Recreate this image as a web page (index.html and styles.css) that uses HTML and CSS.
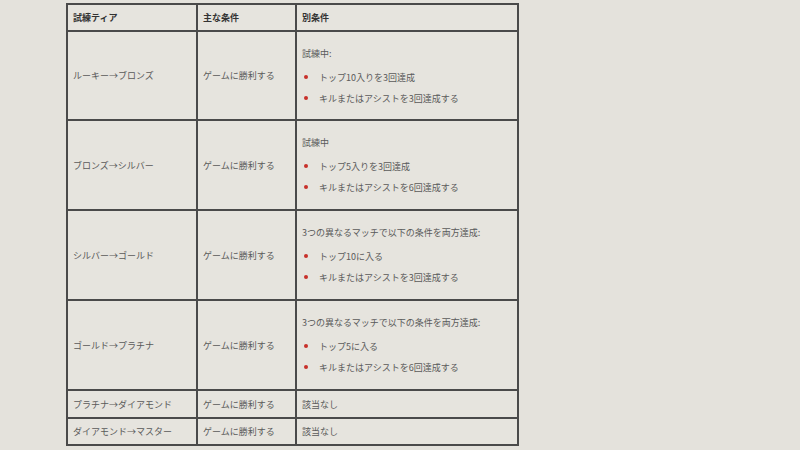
FILE: index.html
```html
<!DOCTYPE html>
<html lang="ja">
<head>
<meta charset="utf-8">
<link rel="stylesheet" href="styles.css">
</head>
<body>
<table class="tiers">
  <colgroup>
    <col class="c1"><col class="c2"><col class="c3">
  </colgroup>
  <thead>
    <tr class="head"><th>試練ティア</th><th>主な条件</th><th>別条件</th></tr>
  </thead>
  <tbody>
    <tr class="tall first">
      <td>ルーキー→ブロンズ</td><td>ゲームに勝利する</td>
      <td><p>試練中:</p><ul><li>トップ10入りを3回達成</li><li>キルまたはアシストを3回達成する</li></ul></td>
    </tr>
    <tr class="tall">
      <td>ブロンズ→シルバー</td><td>ゲームに勝利する</td>
      <td><p>試練中</p><ul><li>トップ5入りを3回達成</li><li>キルまたはアシストを6回達成する</li></ul></td>
    </tr>
    <tr class="tall">
      <td>シルバー→ゴールド</td><td>ゲームに勝利する</td>
      <td><p>3つの異なるマッチで以下の条件を両方達成:</p><ul><li>トップ10に入る</li><li>キルまたはアシストを3回達成する</li></ul></td>
    </tr>
    <tr class="tall">
      <td>ゴールド→プラチナ</td><td>ゲームに勝利する</td>
      <td><p>3つの異なるマッチで以下の条件を両方達成:</p><ul><li>トップ5に入る</li><li>キルまたはアシストを6回達成する</li></ul></td>
    </tr>
    <tr class="short">
      <td>プラチナ→ダイアモンド</td><td>ゲームに勝利する</td><td>該当なし</td>
    </tr>
    <tr class="short last">
      <td>ダイアモンド→マスター</td><td>ゲームに勝利する</td><td>該当なし</td>
    </tr>
  </tbody>
</table>
</body>
</html>
```

FILE: styles.css
```css
html, body {
  margin: 0;
  padding: 0;
  background: #e4e2dc;
}
body {
  font-family: "Noto Sans CJK JP", "Noto Sans", sans-serif;
  font-size: 9px;
  color: #5a5a5a;
  padding: 3px 0 0 66px;
}
.tiers {
  border-collapse: collapse;
  border: 2px solid #3e3e3e;
  background: #e6e4de;
  table-layout: fixed;
  width: 451px;
}
.c1 { width: 130px; }
.c2 { width: 99px; }
.c3 { width: 222px; }
.tiers th, .tiers td {
  border: 2px solid #4a4a4a;
  padding: 0 5px;
  text-align: left;
  vertical-align: middle;
  line-height: 13px;
}
.tiers th {
  font-weight: bold;
  color: #333;
}
.head { height: 27px; }
.tall { height: 90px; }
.first { height: 89px; }
.short { height: 28px; }
.last { height: 27px; }
.short td { border-top-color: #5a5a5a; }
.tiers p {
  margin: 0 0 11px 0;
}
.tiers ul {
  margin: 0;
  padding: 0 0 0 17px;
  list-style: none;
}
.tiers li {
  position: relative;
  margin-top: 8px;
}
.tiers li::before {
  content: "";
  position: absolute;
  left: -15px;
  top: 4px;
  width: 4px;
  height: 4px;
  border-radius: 50%;
  background: #c8302a;
}
```
